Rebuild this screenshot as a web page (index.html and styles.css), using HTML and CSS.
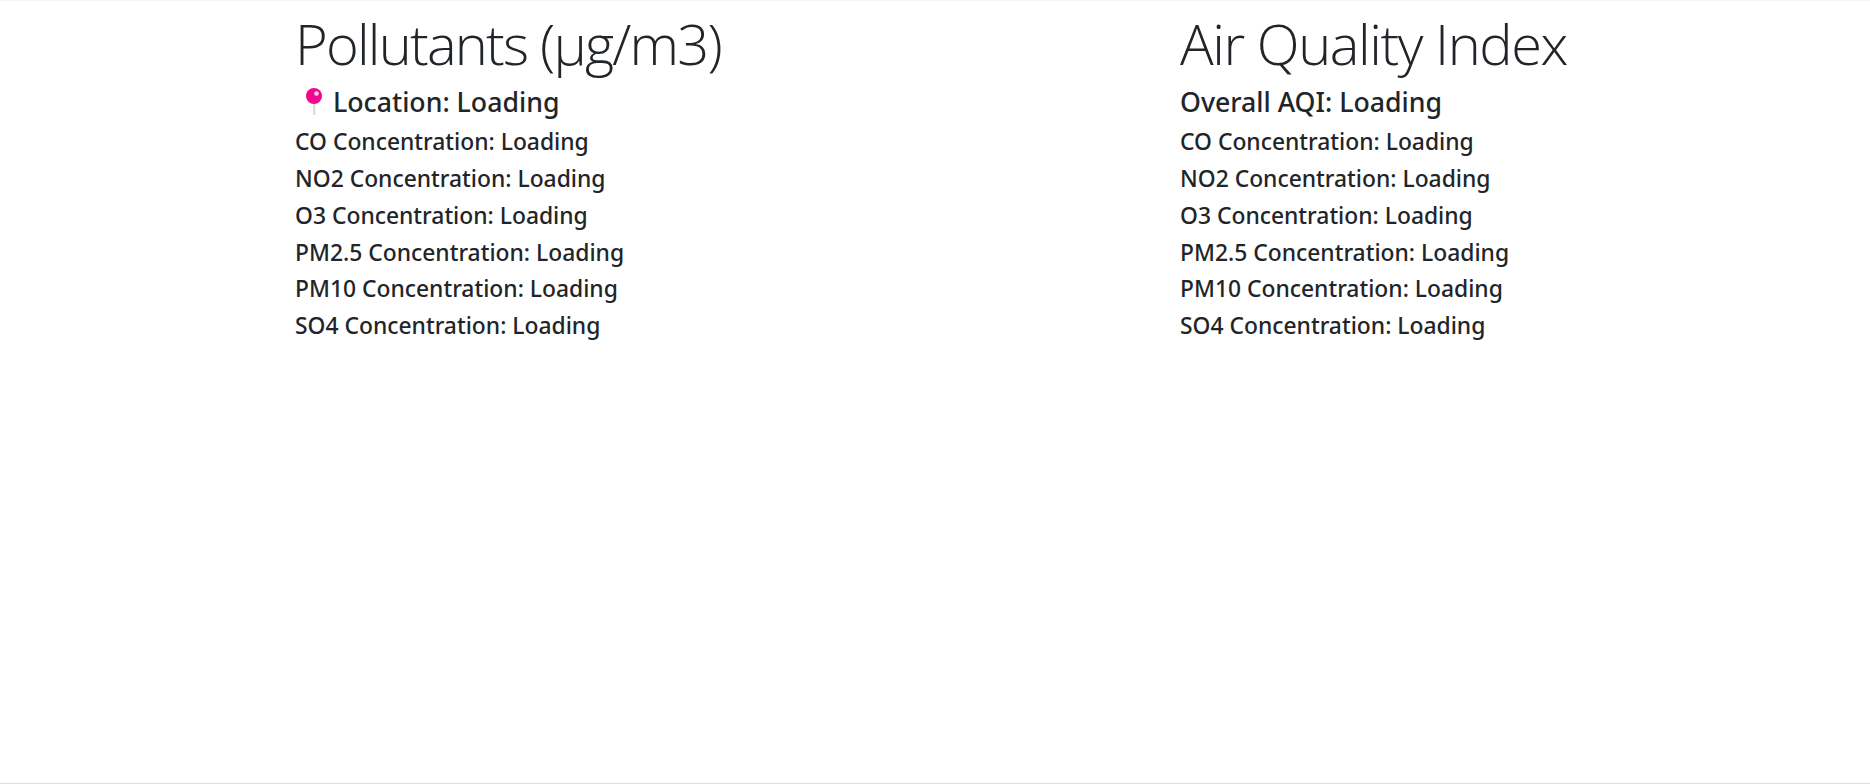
FILE: index.html
```html
<!DOCTYPE html>
<html lang="en">
<head>
    <meta charset="UTF-8">
    <meta name="viewport" content="width=device-width, initial-scale=1.0">
    <title>Air Quality</title>
    <link rel="stylesheet" href="styles.css">
</head>
<body>

    <div class="page">
        <!-- Pollutants column -->
        <section class="col">
            <h1 class="display display-units">Pollutants (μg/m3)</h1>
            <h4 class="lead location">
                <svg class="pin" width="16" height="29" viewBox="0 0 16 29" aria-hidden="true">
                    <rect x="7" y="14" width="2.4" height="14" fill="#dcdcdc"/>
                    <circle cx="8" cy="9" r="8" fill="#f4068f"/>
                    <circle cx="10.5" cy="6.5" r="2.3" fill="#ffd6ec"/>
                </svg>
                <span>Location: Loading</span>
            </h4>
            <h5 class="row">CO Concentration: Loading</h5>
            <h5 class="row">NO2 Concentration: Loading</h5>
            <h5 class="row">O3 Concentration: Loading</h5>
            <h5 class="row">PM2.5 Concentration: Loading</h5>
            <h5 class="row">PM10 Concentration: Loading</h5>
            <h5 class="row">SO4 Concentration: Loading</h5>
        </section>

        <!-- AQI column -->
        <section class="col">
            <h1 class="display">Air Quality Index</h1>
            <h4 class="lead">Overall AQI: Loading</h4>
            <h5 class="row">CO Concentration: Loading</h5>
            <h5 class="row">NO2 Concentration: Loading</h5>
            <h5 class="row">O3 Concentration: Loading</h5>
            <h5 class="row">PM2.5 Concentration: Loading</h5>
            <h5 class="row">PM10 Concentration: Loading</h5>
            <h5 class="row">SO4 Concentration: Loading</h5>
        </section>
    </div>

</body>
</html>
```

FILE: styles.css
```css
/* General page */
html, body {
    height: 100%;
}
body {
    margin: 0;
    background-color: #fff;
    color: #212529;
    font-family: "Noto Sans", "Open Sans", sans-serif;
    box-sizing: border-box;
    border-top: 1px solid #f4f4f4;
    border-bottom: 1px solid #dedede;
    overflow: hidden;
}
/* Two columns */
.page {
    display: grid;
    grid-template-columns: 885px 1fr;
    padding-left: 295px;
}
.col {
    padding-top: 9px;
}
/* Big light title */
.display {
    margin: 0 0 10px;
    font-size: 56px;
    font-weight: 300;
    line-height: 1.2;
    font-family: "Open Sans", "Noto Sans", sans-serif;
    letter-spacing: -1.45px;
}
.display-units {
    letter-spacing: -1.8px;
}
.lead {
    margin: 0 0 11px;
    font-size: 26.7px;
    font-weight: 500;
    line-height: 29px;
}
.location {
    display: flex;
    align-items: center;
    gap: 11px;
}
.pin {
    flex: none;
    margin-left: 11px;
}
.row {
    margin: 0 0 7.8px;
    font-size: 22.85px;
    font-weight: 500;
    line-height: 29px;
}
```
